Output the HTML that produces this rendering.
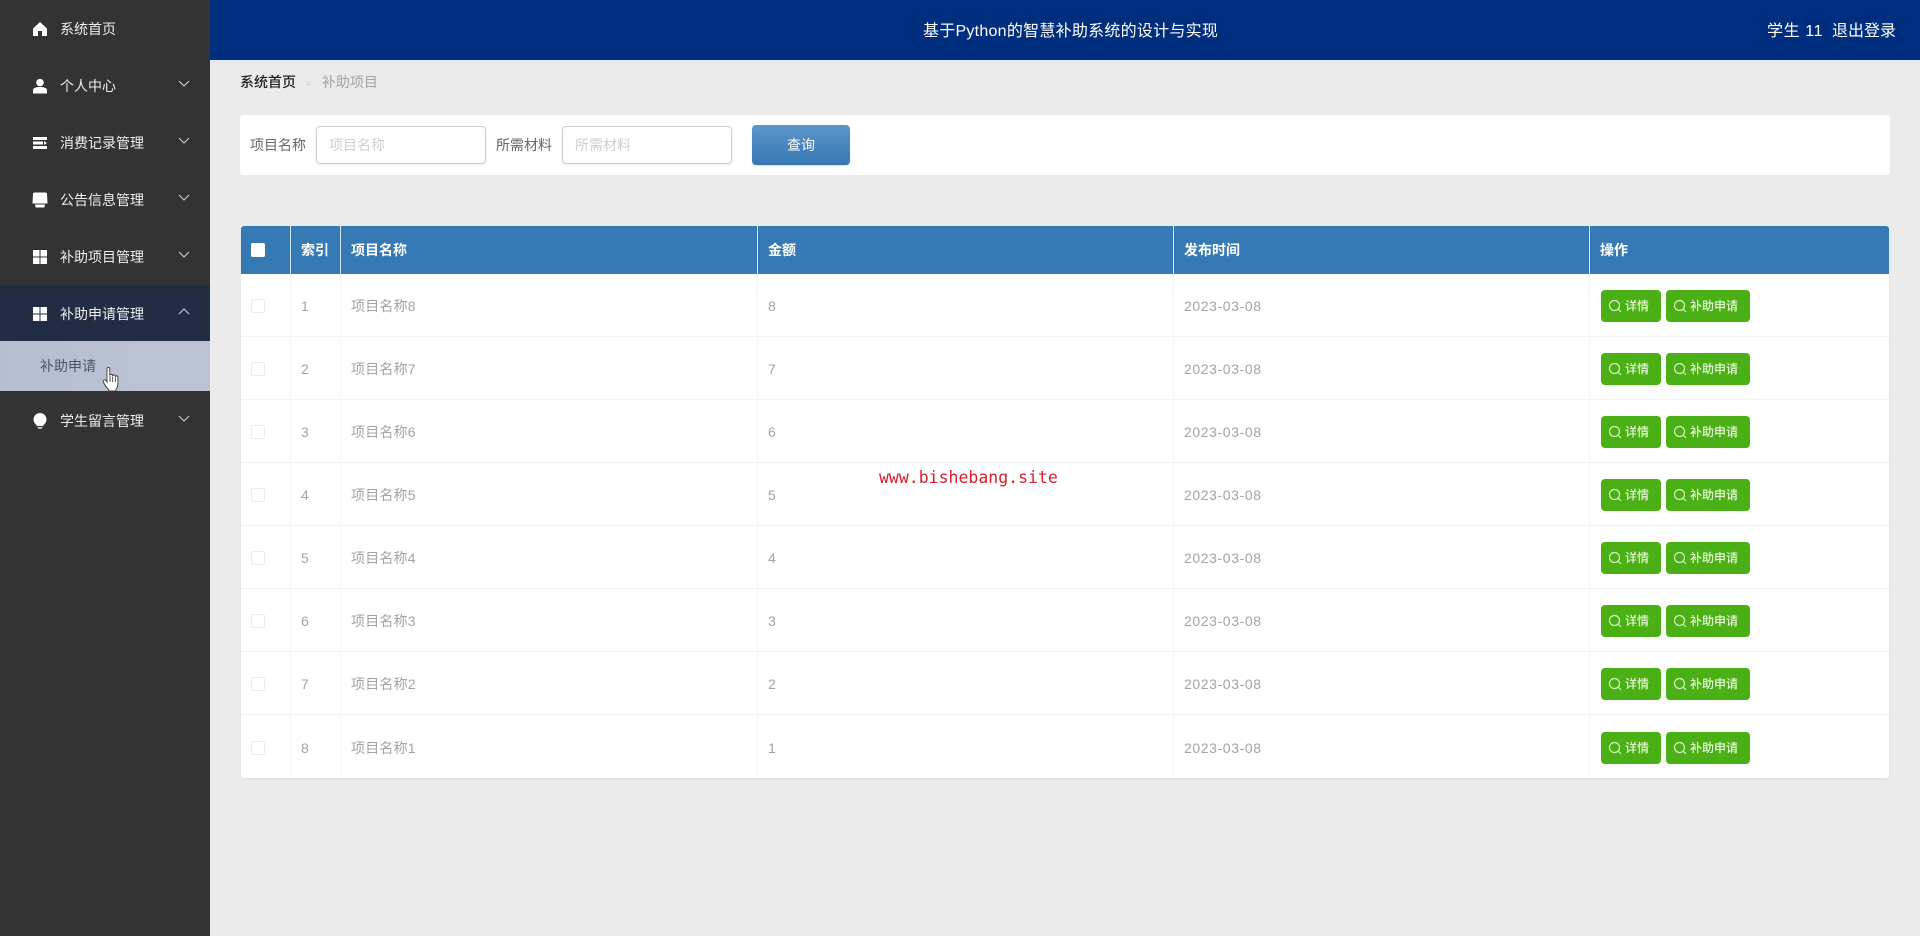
<!DOCTYPE html>
<html lang="zh-CN"><head><meta charset="utf-8"><title>补助项目</title>
<style>
*{box-sizing:border-box}
html,body{margin:0;width:1920px;height:936px;overflow:hidden;background:#ebebeb;font-family:"Liberation Sans","Noto Sans CJK SC",sans-serif;font-size:14px}
#side{position:absolute;left:0;top:0;width:210px;height:936px;background:#333}
.mi{position:absolute;left:0;width:210px;height:57px;color:#eee}
.mi span{position:absolute;left:60px;top:1px;line-height:57px;white-space:nowrap}
.mi svg.ic{position:absolute;left:32px;top:21px;width:16px;height:16px;fill:#fff}
.mi svg.ar{position:absolute;left:177px;top:22px;width:14px;height:9px;fill:none;stroke:#cfcfcf;stroke-width:1.1}
#sub{position:absolute;left:0;top:341px;width:210px;height:50px;background:linear-gradient(90deg,#b5bfd1,#bcc3d4);color:#4c5666;line-height:50px;padding-left:40px}
#hand{position:absolute;left:102px;top:366px;width:19px;height:26px}
#head{position:absolute;left:210px;top:0;width:1710px;height:60px;background:#002e7f;color:#fff;font-size:16px;line-height:60px}
#title{position:absolute;left:713px;top:2px;white-space:nowrap;letter-spacing:.25px}
#user{position:absolute;right:24px;top:2px;white-space:nowrap}
#user em{font-style:normal;letter-spacing:.6px}
#shade{position:absolute;left:210px;top:60px;width:1710px;height:4px;background:#e6e9f3}
#bc{position:absolute;left:240px;top:72px;line-height:20px;font-size:14px;color:#222;font-weight:500;white-space:nowrap}
#bc i{font-style:normal;color:#ccc;margin:0 10px;font-weight:400;font-size:10px}
#bc b{font-weight:400;color:#a3a3a3}
#search{position:absolute;left:240px;top:115px;width:1650px;height:60px;background:#fff;border-radius:3px}
.lb{position:absolute;top:0;line-height:60px;color:#666;white-space:nowrap}
.inp{position:absolute;top:11px;width:170px;height:38px;border:1px solid #cdcdcd;border-radius:4px;color:#cfcfcf;line-height:36px;padding-left:12px;background:#fff;box-shadow:0 1px 2px rgba(0,0,0,.08)}
#btn{position:absolute;left:512px;top:10px;width:98px;height:40px;border-radius:4px;background:linear-gradient(180deg,#5b96cb,#3877b2);color:#fff;text-align:center;line-height:40px;box-shadow:0 1px 1px rgba(0,0,0,.15)}
#tb{position:absolute;left:241px;top:226px;width:1648px;border-collapse:separate;border-spacing:0;table-layout:fixed;background:#fff;color:#a3a3a3;border-radius:3px;box-shadow:0 1px 2px rgba(0,0,0,.05)}
#tb th{height:48px;background:#3579b5;color:#fff;text-align:left;padding:0 0 0 10px;font-weight:700;font-size:14px;border-left:1px solid #cfeaf6}
#tb th:first-child{border-top-left-radius:3px}
#tb th:last-child{border-top-right-radius:3px}
#tb th:first-child,#tb td:first-child{border-left:0}
#tb td{height:63px;padding:2px 0 0 10px;border-left:1px solid #f6f6f6;border-bottom:1px solid #f2f2f2}
#tb td:last-child{padding-left:11px}
#tb tr:last-child td{border-bottom:0}
#tb td.n{letter-spacing:.2px}
#tb td.t{letter-spacing:.6px}
.ck{display:block;width:14px;height:14px;margin-left:0;border:1px solid #ececec;border-radius:2px;background:#fff}
th .ck{border:0;border-radius:2px}
.g{display:inline-block;vertical-align:middle;height:32px;background:#4ab015;color:#e8f8d8;border-radius:4px;font-size:12px;line-height:32px;font-weight:500;padding-left:7px;white-space:nowrap;margin-right:5px;letter-spacing:0}
.g svg{width:14px;height:14px;fill:none;stroke:#d8f2c0;stroke-width:1.2;vertical-align:-3px;margin-right:3px}
.d{width:60px}.s{width:84px}
#wm{position:absolute;left:879px;top:468px;color:#d8202c;font-family:"DejaVu Sans Mono",monospace;font-size:16.5px;line-height:20px;white-space:nowrap}
</style></head><body>
<div id="side">
<div class="mi" style="top:0"><svg class="ic" viewBox="0 0 16 16"><path d="M8 1 1 7.500V15h5v-5h4v5h5V7.500z"/></svg><span>系统首页</span></div>
<div class="mi" style="top:57px"><svg class="ic" viewBox="0 0 16 16"><circle cx="8" cy="4.500" r="3.800"/><path d="M1 15.500v-3C1 10 3.500 9 8 9s7 1 7 3.500v3z"/></svg><span>个人中心</span><svg class="ar" viewBox="0 0 14 9"><path d="M2 2l5 5 5-5"/></svg></div>
<div class="mi" style="top:114px"><svg class="ic" viewBox="0 0 16 16"><path d="M1 2h14v3H1zM1 6.500h10v3H1zM1 11h14v3H1zM12 6l3 2-3 2z"/></svg><span>消费记录管理</span><svg class="ar" viewBox="0 0 14 9"><path d="M2 2l5 5 5-5"/></svg></div>
<div class="mi" style="top:171px"><svg class="ic" viewBox="0 0 16 16"><path d="M2.500 0.500h11a1.500 1.500 0 0 1 1.500 1.500l.5 9.500H.5L1 2a1.500 1.500 0 0 1 1.500-1.500zM3 12.500h10l-.7 3H3.700z"/></svg><span>公告信息管理</span><svg class="ar" viewBox="0 0 14 9"><path d="M2 2l5 5 5-5"/></svg></div>
<div class="mi" style="top:228px"><svg class="ic" viewBox="0 0 16 16"><path d="M1 1h6.500v6.500H1zM8.500 1H15v6.500H8.500zM1 8.500h6.500V15H1zM8.500 8.500H15V15H8.500z"/></svg><span>补助项目管理</span><svg class="ar" viewBox="0 0 14 9"><path d="M2 2l5 5 5-5"/></svg></div>
<div class="mi" style="top:285px;height:56px;background:#202d45"><svg class="ic" viewBox="0 0 16 16"><path d="M1 1h6.500v6.500H1zM8.500 1H15v6.500H8.500zM1 8.500h6.500V15H1zM8.500 8.500H15V15H8.500z"/></svg><span>补助申请管理</span><svg class="ar" viewBox="0 0 14 9"><path d="M2 7l5-5 5 5"/></svg></div>
<div id="sub">补助申请</div>
<div class="mi" style="top:392px"><svg class="ic" viewBox="0 0 16 16" style="top:20px;height:18px"><path d="M8 0a6.500 6.500 0 0 1 3.500 12V13h-7v-1A6.500 6.500 0 0 1 8 0zM5.500 14h5v.8h-5zM6.500 15.300h3v.7h-3z"/></svg><span>学生留言管理</span><svg class="ar" viewBox="0 0 14 9"><path d="M2 2l5 5 5-5"/></svg></div>
<svg id="hand" viewBox="0 0 19 26"><path d="M5 3c0-2.300 2.800-2.300 2.800 0v6.500c.3-1.500 2.500-1.500 2.700 0v.5c.3-1.500 2.500-1.500 2.700 0v.8c.3-1.300 2.600-1.300 2.700.4V17c0 3 -.6 4.500-1.700 6l-.5 2H7l-.5-1.500C5 22 3 19.500 1.500 16.500.5 14.500 2.300 13 4 14.500L5 16z" fill="#fff" stroke="#3a3a3a" stroke-width=".9"/><path d="M8 10v6M10.600 10.500V16M13.300 11v5" stroke="#444" stroke-width=".9" fill="none"/></svg>
</div>
<div id="head"><div id="title">基于Python的智慧补助系统的设计与实现</div><div id="user"><em>学生 11</em>&nbsp;&nbsp;退出登录</div></div>
<div id="shade"></div>
<div id="bc">系统首页<i>=</i><b>补助项目</b></div>
<div id="search">
<div class="lb" style="left:10px">项目名称</div><div class="inp" style="left:76px">项目名称</div>
<div class="lb" style="left:256px">所需材料</div><div class="inp" style="left:322px">所需材料</div>
<div id="btn">查询</div>
</div>
<table id="tb">
<colgroup><col style="width:49px"><col style="width:50px"><col style="width:417px"><col style="width:416px"><col style="width:416px"><col style="width:300px"></colgroup>
<thead><tr><th><span class="ck"></span></th><th>索引</th><th>项目名称</th><th>金额</th><th>发布时间</th><th>操作</th></tr></thead>
<tbody>
<tr><td><span class="ck"></span></td><td class="n">1</td><td class="n">项目名称8</td><td class="n">8</td><td class="t">2023-03-08</td><td><span class="g d"><svg viewBox="0 0 14 14"><circle cx="6.500" cy="6.500" r="5"/><path d="M10 10l3 3"/></svg>详情</span><span class="g s"><svg viewBox="0 0 14 14"><circle cx="6.500" cy="6.500" r="5"/><path d="M10 10l3 3"/></svg>补助申请</span></td></tr>
<tr><td><span class="ck"></span></td><td class="n">2</td><td class="n">项目名称7</td><td class="n">7</td><td class="t">2023-03-08</td><td><span class="g d"><svg viewBox="0 0 14 14"><circle cx="6.500" cy="6.500" r="5"/><path d="M10 10l3 3"/></svg>详情</span><span class="g s"><svg viewBox="0 0 14 14"><circle cx="6.500" cy="6.500" r="5"/><path d="M10 10l3 3"/></svg>补助申请</span></td></tr>
<tr><td><span class="ck"></span></td><td class="n">3</td><td class="n">项目名称6</td><td class="n">6</td><td class="t">2023-03-08</td><td><span class="g d"><svg viewBox="0 0 14 14"><circle cx="6.500" cy="6.500" r="5"/><path d="M10 10l3 3"/></svg>详情</span><span class="g s"><svg viewBox="0 0 14 14"><circle cx="6.500" cy="6.500" r="5"/><path d="M10 10l3 3"/></svg>补助申请</span></td></tr>
<tr><td><span class="ck"></span></td><td class="n">4</td><td class="n">项目名称5</td><td class="n">5</td><td class="t">2023-03-08</td><td><span class="g d"><svg viewBox="0 0 14 14"><circle cx="6.500" cy="6.500" r="5"/><path d="M10 10l3 3"/></svg>详情</span><span class="g s"><svg viewBox="0 0 14 14"><circle cx="6.500" cy="6.500" r="5"/><path d="M10 10l3 3"/></svg>补助申请</span></td></tr>
<tr><td><span class="ck"></span></td><td class="n">5</td><td class="n">项目名称4</td><td class="n">4</td><td class="t">2023-03-08</td><td><span class="g d"><svg viewBox="0 0 14 14"><circle cx="6.500" cy="6.500" r="5"/><path d="M10 10l3 3"/></svg>详情</span><span class="g s"><svg viewBox="0 0 14 14"><circle cx="6.500" cy="6.500" r="5"/><path d="M10 10l3 3"/></svg>补助申请</span></td></tr>
<tr><td><span class="ck"></span></td><td class="n">6</td><td class="n">项目名称3</td><td class="n">3</td><td class="t">2023-03-08</td><td><span class="g d"><svg viewBox="0 0 14 14"><circle cx="6.500" cy="6.500" r="5"/><path d="M10 10l3 3"/></svg>详情</span><span class="g s"><svg viewBox="0 0 14 14"><circle cx="6.500" cy="6.500" r="5"/><path d="M10 10l3 3"/></svg>补助申请</span></td></tr>
<tr><td><span class="ck"></span></td><td class="n">7</td><td class="n">项目名称2</td><td class="n">2</td><td class="t">2023-03-08</td><td><span class="g d"><svg viewBox="0 0 14 14"><circle cx="6.500" cy="6.500" r="5"/><path d="M10 10l3 3"/></svg>详情</span><span class="g s"><svg viewBox="0 0 14 14"><circle cx="6.500" cy="6.500" r="5"/><path d="M10 10l3 3"/></svg>补助申请</span></td></tr>
<tr><td><span class="ck"></span></td><td class="n">8</td><td class="n">项目名称1</td><td class="n">1</td><td class="t">2023-03-08</td><td><span class="g d"><svg viewBox="0 0 14 14"><circle cx="6.500" cy="6.500" r="5"/><path d="M10 10l3 3"/></svg>详情</span><span class="g s"><svg viewBox="0 0 14 14"><circle cx="6.500" cy="6.500" r="5"/><path d="M10 10l3 3"/></svg>补助申请</span></td></tr>
</tbody></table>
<div id="wm">www.bishebang.site</div>
</body></html>
